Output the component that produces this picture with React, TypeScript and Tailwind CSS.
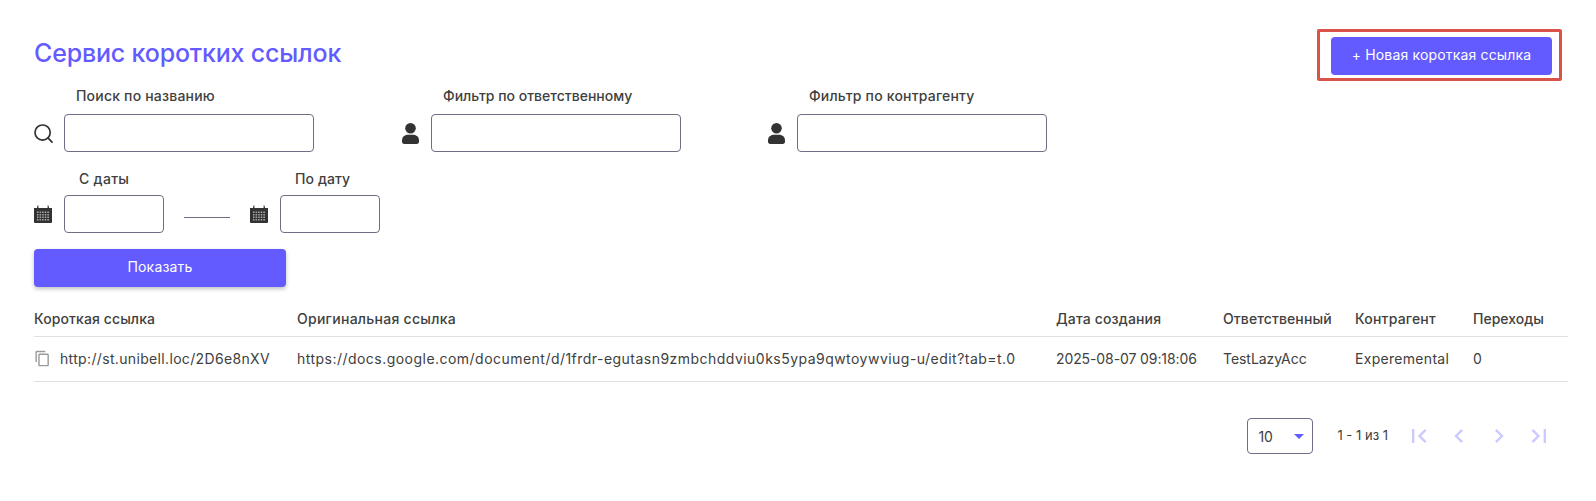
import React from "react";
import { MdContentCopy, MdFirstPage, MdLastPage, MdChevronLeft, MdChevronRight } from "react-icons/md";

const font = { fontFamily: "Inter, 'Noto Sans', sans-serif" };

function SearchIcon() {
  return (
    <svg width="19" height="19" viewBox="0 0 19 19" fill="none" stroke="#333" strokeWidth="1.7" strokeLinecap="round">
      <circle cx="8.6" cy="8.6" r="7.6" />
      <path d="M14.2 14.2 L18 18.2" />
    </svg>
  );
}

function PersonIcon() {
  return (
    <svg width="17" height="21" viewBox="0 0 17 21" className="ml-[1px]" fill="#333">
      <circle cx="8.5" cy="5.3" r="5.3" />
      <path d="M0 17.5C0 14 2.5 11.8 6 11.8h5c3.5 0 6 2.2 6 5.7v1.3c0 1.3-1 2.2-2.2 2.2H2.2C1 21 0 20.1 0 18.8z" />
    </svg>
  );
}

function CalendarIcon() {
  return (
    <svg width="18" height="18" viewBox="0 0 18 18">
      <path fill="#333" d="M0 3h3v-1h1v1h10v-1h1v1h3v14.2a.8.8 0 0 1-.8.8H.8a.8.8 0 0 1-.8-.8z" />
      <rect x="3.4" y="0.4" width="1" height="4" fill="#333" />
      <rect x="13.6" y="0.4" width="1" height="4" fill="#333" />
      {[6.5, 9, 11.5, 14].map((y) =>
        [3, 5.6, 8.2, 10.8, 13.4].map((x) => <rect key={`${x}-${y}`} x={x} y={y} width="1.5" height="1.5" fill="#a8a8a8" />)
      )}
    </svg>
  );
}

function Filter({ label, icon, inputClass, labelClass, gapClass }: { label: string; icon: React.ReactNode; inputClass: string; labelClass: string; gapClass: string }) {
  return (
    <div className="flex flex-col">
      <div className={`h-[19px] text-[14px] leading-[19px] font-medium text-[#404040] ${labelClass}`}>{label}</div>
      <div className={`${gapClass} flex items-center`}>
        <div className="flex w-[30px] shrink-0 justify-start">{icon}</div>
        <div className={`h-[38px] rounded-[4px] border border-[#6e6e85] bg-white ${inputClass}`} />
      </div>
    </div>
  );
}

const headers = [
  { t: "Короткая ссылка", c: "tracking-[0.1px]" },
  { t: "Оригинальная ссылка", c: "tracking-[0.27px]" },
  { t: "Дата создания", c: "tracking-[0.15px]" },
  { t: "Ответственный", c: "tracking-[0.1px]" },
  { t: "Контрагент", c: "tracking-[0.2px]" },
  { t: "Переходы", c: "tracking-[0px]" },
];
const cols = "grid grid-cols-[263px_759px_167px_132px_118px_95px]";

export default function App() {
  return (
    <div style={font} className="h-[501px] w-[1596px] bg-white pl-[34px] pr-[28px] text-[#404040]">
      <div className="flex items-center justify-between pt-[29px] pr-[6px]">
        <h1 className="pb-[2px] text-[25px] font-medium tracking-[-0.18px] text-[#635bff]">Сервис коротких ссылок</h1>
        <div className="rounded-[2px] border-[3px] border-[#d9534a] pb-[3px] pl-[11px] pr-[7px] pt-[5px]">
          <button className="block h-[38px] w-[221px] rounded-[4px] bg-[#635bff] pb-[3px] text-[14px] tracking-[0.17px] text-white">+ Новая короткая ссылка</button>
        </div>
      </div>

      <div className="mt-[5px] flex">
        <Filter label="Поиск по названию" labelClass="pl-[42px] tracking-[0.2px]" gapClass="mt-[9px]" inputClass="w-[250px]" icon={<SearchIcon />} />
        <div className="ml-[87px]">
          <Filter label="Фильтр по ответственному" labelClass="pl-[42px] tracking-[0px]" gapClass="mt-[9px]" inputClass="w-[250px]" icon={<PersonIcon />} />
        </div>
        <div className="ml-[86px]">
          <Filter label="Фильтр по контрагенту" labelClass="pl-[42px] tracking-[0.2px]" gapClass="mt-[9px]" inputClass="w-[250px]" icon={<PersonIcon />} />
        </div>
      </div>

      <div className="mt-[17px] flex items-end">
        <Filter label="С даты" labelClass="pl-[45px] tracking-[0.3px]" gapClass="mt-[7px]" inputClass="w-[100px]" icon={<CalendarIcon />} />
        <div className="mb-[15px] ml-[20px] mr-[20px] h-px w-[46px] bg-[#6e6e85]" />
        <Filter label="По дату" labelClass="pl-[45px] tracking-[0.1px]" gapClass="mt-[7px]" inputClass="w-[100px]" icon={<CalendarIcon />} />
      </div>

      <button className="mt-[16px] block h-[38px] w-[252px] rounded-[4px] bg-[#635bff] pb-[3px] text-[14px] tracking-[0.2px] text-white shadow-[0_2px_4px_rgba(0,0,0,0.25)]">Показать</button>

      <div className={`${cols} h-[50px] items-center border-b border-[#e0e0e0] pt-[13px] text-[14px] font-medium`}>
        {headers.map((h) => <div key={h.t} className={h.c}>{h.t}</div>)}
      </div>
      <div className={`${cols} h-[45px] items-center border-b border-[#e0e0e0] pb-[2px] text-[14px]`}>
        <div className="flex items-center gap-[9px] tracking-[0.34px]"><MdContentCopy size={17} color="#9a9a9a" />http://st.unibell.loc/2D6e8nXV</div>
        <div className="tracking-[0.47px]">https://docs.google.com/document/d/1frdr-egutasn9zmbchddviu0ks5ypa9qwtoywviug-u/edit?tab=t.0</div>
        <div className="tracking-[-0.1px]">2025-08-07 09:18:06</div>
        <div className="tracking-[-0.05px]">TestLazyAcc</div>
        <div className="tracking-[0.3px]">Experemental</div>
        <div>0</div>
      </div>

      <div className="mt-[36px] flex items-center justify-end pr-[15px]">
        <div className="flex h-[36px] w-[66px] items-center justify-between rounded-[4px] border border-[#6e6e85] pl-[10px] pr-[8px] text-[14px]">
          <span>10</span>
          <span className="h-0 w-0 border-x-[5px] border-t-[5px] border-x-transparent border-t-[#635bff]" />
        </div>
        <div className="ml-[24px] text-[13px]">1 - 1 из 1</div>
        <div className="ml-[17px] flex items-center gap-[12px] text-[#ccc9ff]">
          <MdFirstPage size={28} />
          <MdChevronLeft size={28} />
          <MdChevronRight size={28} />
          <MdLastPage size={28} />
        </div>
      </div>
    </div>
  );
}
